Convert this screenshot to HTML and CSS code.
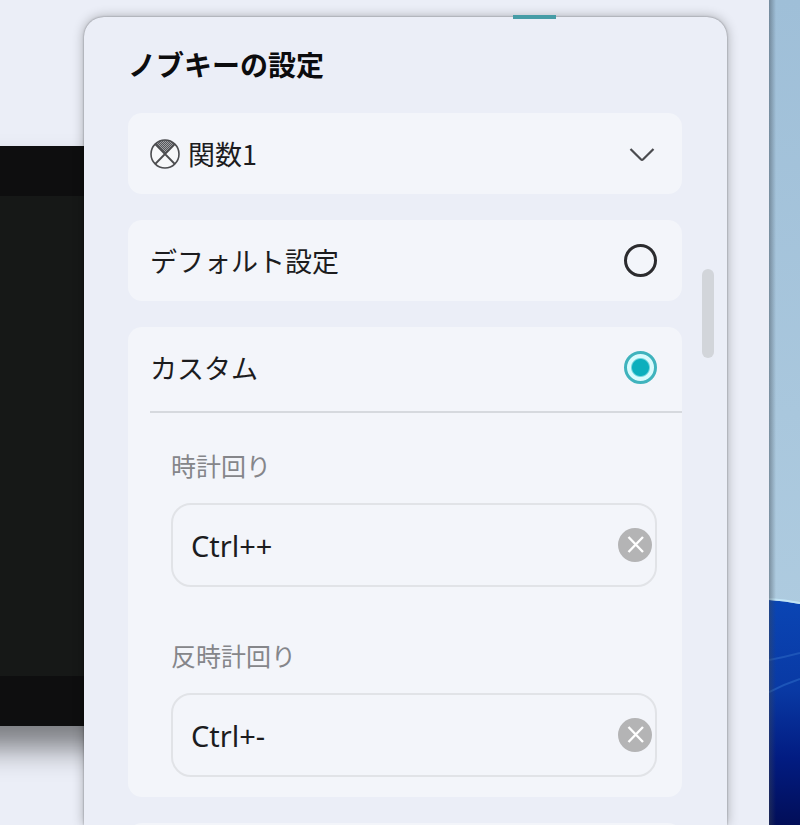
FILE: index.html
```html
<!DOCTYPE html>
<html lang="ja">
<head>
    <meta charset="UTF-8">
    <meta name="viewport" content="width=device-width, initial-scale=1.0">
    <title>ノブキーの設定</title>
    <link rel="stylesheet" href="styles.css">
</head>
<body>
    <div class="app">
        <div class="preview">
            <div class="device"></div>
        </div>

        <main class="panel">
            <span class="tab-marker"></span>
            <h1>ノブキーの設定</h1>

            <form class="cards">
                <div class="card row">
                    <svg class="knob" viewBox="0 0 30 30" aria-hidden="true">
                        <defs>
                            <pattern id="mesh" width="2" height="2" patternUnits="userSpaceOnUse">
                                <rect width="2" height="2" fill="#a2a3a7"/>
                                <rect width="1" height="1" fill="#55565a"/>
                                <rect x="1" y="1" width="1" height="1" fill="#55565a"/>
                            </pattern>
                        </defs>
                        <circle cx="15" cy="15" r="14" fill="#f7f8fa"/>
                        <path d="M15 15 L5.2 5 A14 14 0 0 1 24.8 5 Z" fill="url(#mesh)"/>
                        <circle cx="15" cy="15" r="14" fill="none" stroke="#4c4d50" stroke-width="1.6"/>
                        <path d="M5.2 5 L24.8 25 M24.8 5 L5.2 25" stroke="#4c4d50" stroke-width="1.8"/>
                    </svg>
                    <select class="function" aria-label="関数">
                        <option>関数1</option>
                    </select>
                    <svg class="chevron" viewBox="0 0 28 16" aria-hidden="true">
                        <path d="M1.5 3 L11.8 13.3 Q13 14.5 14.2 13.3 L24.5 3" fill="none" stroke="#4a4b4f" stroke-width="2.2"/>
                    </svg>
                </div>

                <label class="card row">
                    <span>デフォルト設定</span>
                    <input type="radio" name="mode" value="default">
                </label>

                <div class="card">
                    <label class="row custom">
                        <span>カスタム</span>
                        <input type="radio" name="mode" value="custom" checked>
                    </label>
                    <div class="fields">
                        <div class="field">
                            <label for="cw">時計回り</label>
                            <div class="keybox">
                                <input type="text" id="cw" value="Ctrl++">
                                <button type="button" aria-label="クリア">
                                    <svg viewBox="0 0 34 34"><path d="M10.5 9 L25 24 M25 9 L10.5 24" stroke="#fff" stroke-width="2.4"/></svg>
                                </button>
                            </div>
                        </div>
                        <div class="field">
                            <label for="ccw">反時計回り</label>
                            <div class="keybox">
                                <input type="text" id="ccw" value="Ctrl+-">
                                <button type="button" aria-label="クリア">
                                    <svg viewBox="0 0 34 34"><path d="M10.5 9 L25 24 M25 9 L10.5 24" stroke="#fff" stroke-width="2.4"/></svg>
                                </button>
                            </div>
                        </div>
                    </div>
                </div>

                <div class="card row"></div>
            </form>
            <span class="scroll-thumb"></span>
        </main>
    </div>

    <div class="desktop">
        <svg viewBox="0 0 31 825" preserveAspectRatio="none" aria-hidden="true">
            <defs>
                <linearGradient id="sky" x1="0" y1="0" x2="0" y2="1">
                    <stop offset="0" stop-color="#9fbfd8"/>
                    <stop offset="1" stop-color="#b3cfe2"/>
                </linearGradient>
                <linearGradient id="petal" x1="0" y1="0" x2="0" y2="1">
                    <stop offset="0" stop-color="#0a45b4"/>
                    <stop offset="0.4" stop-color="#0939a4"/>
                    <stop offset="0.7" stop-color="#021c82"/>
                    <stop offset="1" stop-color="#020e58"/>
                </linearGradient>
                <linearGradient id="edge">
                    <stop offset="0" stop-color="#3c4650" stop-opacity="0.45"/>
                    <stop offset="1" stop-color="#3c4650" stop-opacity="0"/>
                </linearGradient>
            </defs>
            <rect width="31" height="825" fill="url(#sky)"/>
            <path d="M0 600 Q16 601 31 604 V825 H0 Z" fill="url(#petal)"/>
            <path d="M0 599 Q16 600 31 603" fill="none" stroke="#c2e4f5" stroke-width="2"/>
            <path d="M0 660 Q16 657 31 653 M0 692 Q16 684 31 679" fill="none" stroke="#1d55b8" stroke-width="2"/>
            <rect width="7" height="825" fill="url(#edge)"/>
        </svg>
    </div>
</body>
</html>
```
FILE: styles.css
```css
* {
    box-sizing: border-box;
}
body {
    font-family: "Noto Sans", "Noto Sans CJK JP", sans-serif;
    font-size: 27px;
    color: #1c1c1e;
    background: #ebeef7;
    margin: 0;
    height: 100vh;
    display: flex;
    overflow: hidden;
}
.app {
    flex: 1;
    display: flex;
    padding-right: 42px;
}
.preview {
    width: 84px;
    padding-top: 146px;
}
/* runs under the panel on the right and off the window on the left */
.device {
    height: 580px;
    margin: 0 -60px;
    background: #161817;
    border-top: 50px solid #0e0e0f;
    border-bottom: 50px solid #0e0e0f;
    box-shadow: 0 22px 28px rgba(0, 0, 0, 0.48);
}
.panel {
    position: relative;
    flex: 1;
    margin-top: 17px;
    padding: 24px 45px 0 44px;
    background: #ebeef7;
    border-radius: 20px 20px 0 0;
    box-shadow: 0 0 2px rgba(0, 0, 0, 0.4), 0 0 12px rgba(0, 0, 0, 0.3);
}
.tab-marker {
    position: absolute;
    top: -2px;
    left: 429px;
    width: 43px;
    height: 4px;
    background: #469ca6;
}
.scroll-thumb {
    position: absolute;
    top: 252px;
    right: 13px;
    width: 12px;
    height: 89px;
    border-radius: 6px;
    background: #d2d5da;
}
h1 {
    margin: 0 0 26px;
    font-family: "Noto Sans CJK JP", sans-serif;
    font-size: 28px;
    line-height: 46px;
    font-weight: bold;
    color: #0c0c0e;
}
.cards {
    display: flex;
    flex-direction: column;
    gap: 26px;
}
.card {
    background: #f3f5fa;
    border-radius: 14px;
    font-family: "Noto Sans CJK JP", sans-serif;
}
.row {
    display: flex;
    align-items: center;
    justify-content: space-between;
    height: 81px;
    padding: 0 25px 0 22px;
}
.knob {
    width: 30px;
    height: 30px;
    margin-right: 8px;
}
.function {
    flex: 1;
    appearance: none;
    border: none;
    padding: 0;
    background: none;
    font: inherit;
    color: inherit;
}
.chevron {
    width: 28px;
    height: 16px;
}
input[type="radio"] {
    appearance: none;
    width: 33px;
    height: 33px;
    margin: 0;
    border: 3px solid #2b2b2e;
    border-radius: 50%;
}
input[type="radio"]:checked {
    border-color: #3fb3bd;
    background: radial-gradient(circle, #0cafbd 8px, #d9fbfd 10px);
}
.custom {
    height: 86px;
    margin-left: 22px;
    padding: 0 25px 3px 0;
    border-bottom: 2px solid #d6d9de;
}
.fields {
    display: flex;
    flex-direction: column;
    gap: 50px;
    padding: 34px 25px 20px 43px;
}
.field {
    display: flex;
    flex-direction: column;
    gap: 20px;
}
.field label {
    font-size: 25px;
    line-height: 36px;
    color: #85868a;
}
.keybox {
    display: flex;
    align-items: center;
    height: 84px;
    padding: 0 3px 0 18px;
    border: 2px solid #e1e3e7;
    border-radius: 20px;
}
.keybox input {
    flex: 1;
    min-width: 0;
    padding: 0;
    border: none;
    outline: none;
    background: none;
    font-family: "Noto Sans", sans-serif;
    font-size: 29px;
    color: #1c1c1e;
}
.keybox button {
    width: 34px;
    height: 34px;
    padding: 0;
    border: none;
    border-radius: 50%;
    background: #b4b4b5;
    cursor: pointer;
}
.keybox svg {
    display: block;
}
.desktop {
    width: 31px;
}
.desktop svg {
    display: block;
    width: 100%;
    height: 100%;
}
```
